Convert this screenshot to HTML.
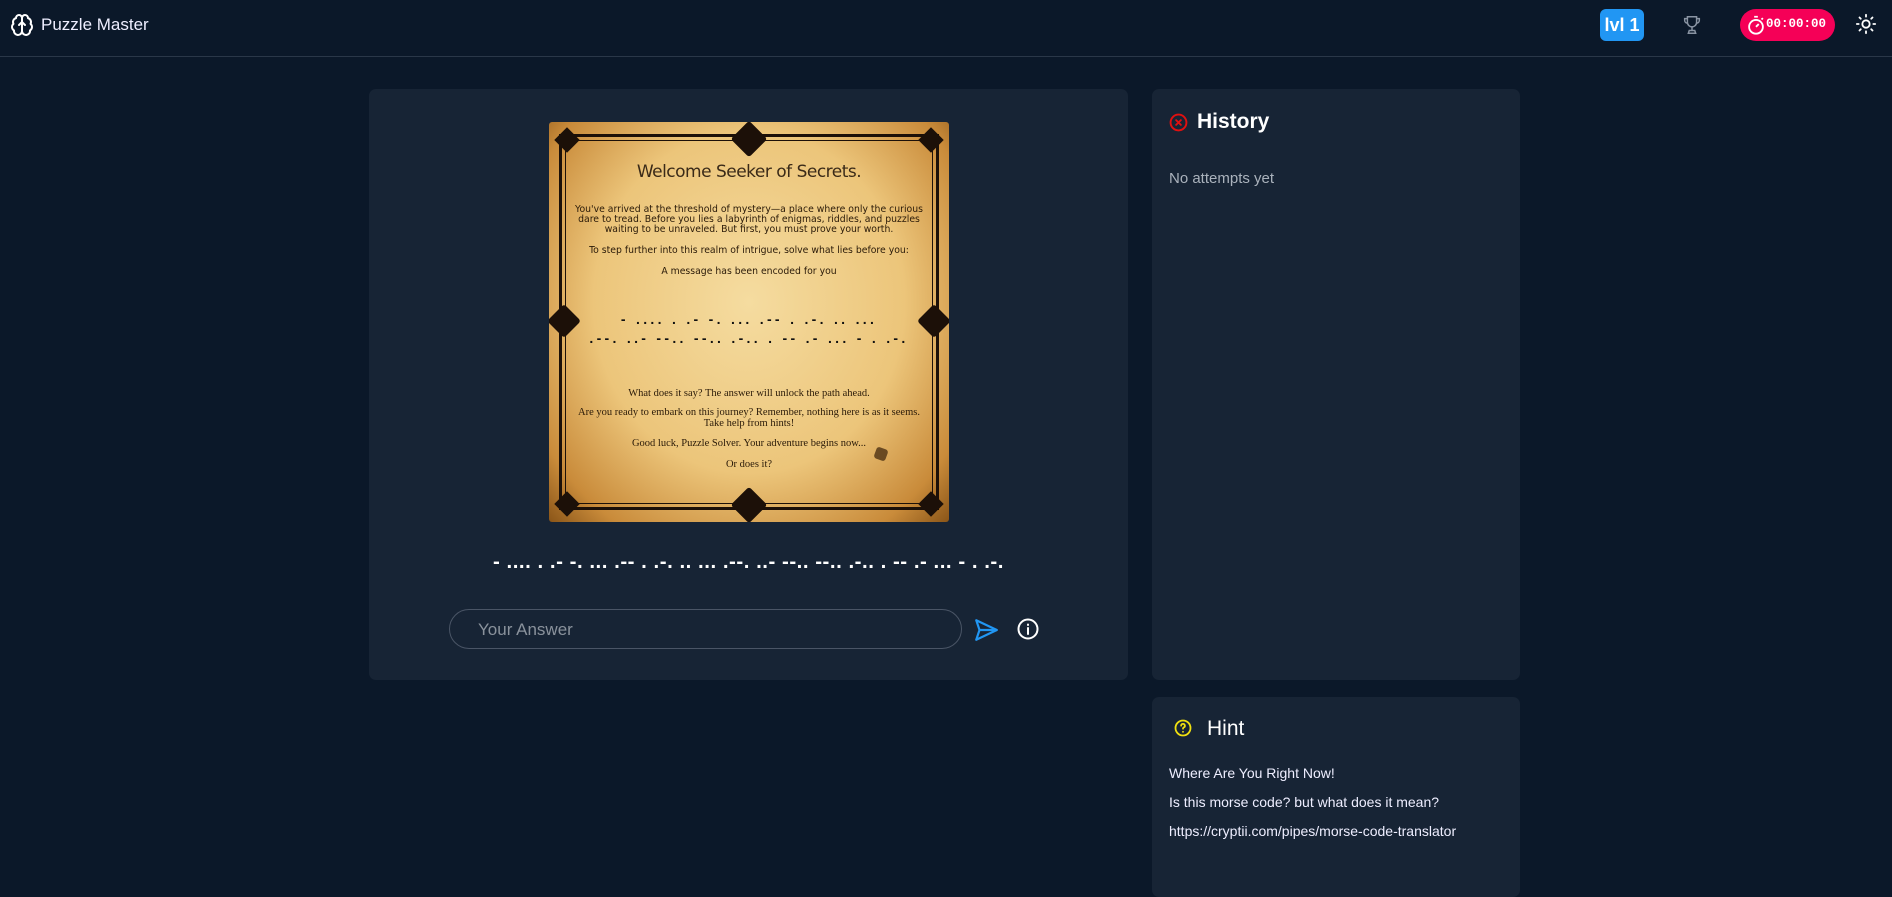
<!DOCTYPE html>
<html><head><meta charset="utf-8"><style>
*{box-sizing:border-box;margin:0;padding:0}
body{width:1892px;height:843px;overflow:hidden;background:#0b1829;font-family:"Liberation Sans",sans-serif;color:#fff;position:relative}
.hdr{position:absolute;left:0;top:0;width:1892px;height:57px;border-bottom:1px solid #2a3748}
.abs{position:absolute}
.card{position:absolute;background:#172435;border-radius:7px}
.p{position:absolute;left:0;width:400px;text-align:center;color:#2a1a08;white-space:nowrap}
</style></head><body>
<div class="hdr">
<svg class="abs" style="left:10px;top:13px" width="24" height="24" viewBox="0 0 24 24" fill="none" stroke="#fff" stroke-width="2" stroke-linecap="round" stroke-linejoin="round"><path d="M12 5a3 3 0 1 0-5.997.125 4 4 0 0 0-2.526 5.77 4 4 0 0 0 .556 6.588A4 4 0 1 0 12 18Z"/><path d="M12 5a3 3 0 1 1 5.997.125 4 4 0 0 1 2.526 5.77 4 4 0 0 1-.556 6.588A4 4 0 1 1 12 18Z"/><path d="M12 18V9M9 12l3-3 3 3"/></svg>
<div class="abs" style="left:41px;top:15px;font-size:17px;color:#eef">Puzzle Master</div>
<div class="abs" style="left:1600px;top:9px;width:44px;height:32px;background:#2196f3;border-radius:6px;font-weight:bold;font-size:18px;text-align:center;line-height:32px">lvl 1</div>
<svg class="abs" style="left:1681px;top:14px" width="22" height="22" viewBox="0 0 24 24" fill="none" stroke="#8a94a3" stroke-width="1.6"><path d="M7 3h10v6a5 5 0 0 1-10 0Z"/><path d="M7 5H4v2a3 3 0 0 0 3 3M17 5h3v2a3 3 0 0 1-3 3"/><path d="M12 14v4M8 21h8l-1-3H9Z"/></svg>
<div class="abs" style="left:1740px;top:9px;width:95px;height:32px;background:#f50057;border-radius:16px"></div>
<svg class="abs" style="left:1745px;top:14px" width="22" height="22" viewBox="0 0 24 24" fill="none" stroke="#fff" stroke-width="2"><circle cx="12" cy="14" r="7.5"/><path d="M10 3h4M12 14l3-3M18 6l1.5-1.5"/></svg>
<div class="abs" style="left:1766px;top:17px;font-family:'Liberation Mono',monospace;font-weight:bold;font-size:12.5px">00:00:00</div>
<svg class="abs" style="left:1855px;top:13px" width="22" height="22" viewBox="0 0 24 24" fill="none" stroke="#fff" stroke-width="2" stroke-linecap="round"><circle cx="12" cy="12" r="4"/><path d="M12 2v2M12 20v2M4.9 4.9l1.4 1.4M17.7 17.7l1.4 1.4M2 12h2M20 12h2M4.9 19.1l1.4-1.4M17.7 6.3l1.4-1.4"/></svg>
</div>

<div class="card" style="left:369px;top:89px;width:759px;height:591px"></div>
<div class="abs" style="left:549px;top:122px;width:400px;height:400px;background:radial-gradient(ellipse at 50% 45%,#f5dca0 0%,#ecc57a 55%,#c98b3a 85%,#8a5518 100%);border-radius:3px;overflow:hidden">
<div class="abs" style="left:10px;top:12px;width:380px;height:376px;border:3px solid #1c1008"></div>
<div class="abs" style="left:16px;top:18px;width:368px;height:364px;border:1.5px solid #1c1008"></div>
<div class="abs" style="left:187px;top:4px;width:26px;height:26px;background:#1c1008;transform:rotate(45deg);border-radius:3px"></div>
<div class="abs" style="left:187px;top:370px;width:26px;height:26px;background:#1c1008;transform:rotate(45deg);border-radius:3px"></div>
<div class="abs" style="left:3px;top:187px;width:24px;height:24px;background:#1c1008;transform:rotate(45deg);border-radius:3px"></div>
<div class="abs" style="left:373px;top:187px;width:24px;height:24px;background:#1c1008;transform:rotate(45deg);border-radius:3px"></div>
<div class="abs" style="left:9px;top:9px;width:18px;height:18px;background:#1c1008;transform:rotate(45deg)"></div>
<div class="abs" style="left:373px;top:9px;width:18px;height:18px;background:#1c1008;transform:rotate(45deg)"></div>
<div class="abs" style="left:9px;top:373px;width:18px;height:18px;background:#1c1008;transform:rotate(45deg)"></div>
<div class="abs" style="left:373px;top:373px;width:18px;height:18px;background:#1c1008;transform:rotate(45deg)"></div>
<div class="p" style="top:40px;font-size:17px;font-family:'DejaVu Sans',sans-serif;color:#3a2a18;letter-spacing:-0.5px">Welcome Seeker of Secrets.</div>
<div class="p" style="top:83px;font-size:9.3px;line-height:10px;font-family:'DejaVu Sans',sans-serif">You've arrived at the threshold of mystery—a place where only the curious<br>dare to tread. Before you lies a labyrinth of enigmas, riddles, and puzzles<br>waiting to be unraveled. But first, you must prove your worth.</div>
<div class="p" style="top:123px;font-size:9.3px;font-family:'DejaVu Sans',sans-serif">To step further into this realm of intrigue, solve what lies before you:</div>
<div class="p" style="top:144px;font-size:9.3px;font-family:'DejaVu Sans',sans-serif">A message has been encoded for you</div>
<div class="p" style="top:188px;font-size:14px;line-height:19px;font-weight:bold;color:#111;letter-spacing:3.3px">- .... . .- -. ... .-- . .-. .. ...<br>.--. ..- --.. --.. .-.. . -- .- ... - . .-.</div>
<div class="p" style="top:266px;font-size:10.5px;font-family:'Liberation Serif',serif">What does it say? The answer will unlock the path ahead.</div>
<div class="p" style="top:285px;font-size:10.5px;line-height:11px;font-family:'Liberation Serif',serif">Are you ready to embark on this journey? Remember, nothing here is as it seems.<br>Take help from hints!</div>
<div class="p" style="top:316px;font-size:10.5px;font-family:'Liberation Serif',serif">Good luck, Puzzle Solver. Your adventure begins now...</div>
<div class="p" style="top:337px;font-size:10.5px;font-family:'Liberation Serif',serif">Or does it?</div>
<div class="abs" style="left:326px;top:326px;width:12px;height:12px;background:#6a4a22;border-radius:3px;transform:rotate(20deg)"></div>
</div>
<div class="abs" style="left:369px;top:550px;width:759px;text-align:center;font-size:20.5px;font-weight:bold;letter-spacing:0.5px;white-space:nowrap">- .... . .- -. ... .-- . .-. .. ... .--. ..- --.. --.. .-.. . -- .- ... - . .-.</div>
<div class="abs" style="left:449px;top:609px;width:513px;height:40px;border:1px solid #4a5566;border-radius:20px;font-size:17px;color:#8a929c;padding:10px 0 0 28px">Your Answer</div>
<svg class="abs" style="left:973px;top:617px" width="26" height="26" viewBox="0 0 24 24" fill="none" stroke="#2196f3" stroke-width="2" stroke-linejoin="round"><path d="M3 3l19 9-19 9 3-9Z"/><path d="M6 12h16"/></svg>
<svg class="abs" style="left:1016px;top:617px" width="24" height="24" viewBox="0 0 24 24" fill="none" stroke="#fff" stroke-width="2" stroke-linecap="round"><circle cx="12" cy="12" r="9.5"/><path d="M12 11v6M12 7.5v.5"/></svg>

<div class="card" style="left:1152px;top:89px;width:368px;height:591px"></div>
<svg class="abs" style="left:1169px;top:113px" width="19" height="19" viewBox="0 0 24 24" fill="none" stroke="#e01010" stroke-width="2.4" stroke-linecap="round"><circle cx="12" cy="12" r="10"/><path d="M9 9l6 6M15 9l-6 6"/></svg>
<div class="abs" style="left:1197px;top:110px;font-size:21px;font-weight:bold">History</div>
<div class="abs" style="left:1169px;top:170px;font-size:15px;color:#aab2bc">No attempts yet</div>

<div class="card" style="left:1152px;top:697px;width:368px;height:200px"></div>
<svg class="abs" style="left:1174px;top:719px" width="18" height="18" viewBox="0 0 24 24" fill="none" stroke="#f0e010" stroke-width="2.4" stroke-linecap="round"><circle cx="12" cy="12" r="10"/><path d="M9.5 9a2.5 2.5 0 1 1 3.5 2.3c-.7.3-1 .9-1 1.7M12 17v.2"/></svg>
<div class="abs" style="left:1207px;top:717px;font-size:21px">Hint</div>
<div class="abs" style="left:1169px;top:759px;font-size:14px;line-height:29px;color:#eef">Where Are You Right Now!<br>Is this morse code? but what does it mean?<br>https://cryptii.com/pipes/morse-code-translator</div>
</body></html>
